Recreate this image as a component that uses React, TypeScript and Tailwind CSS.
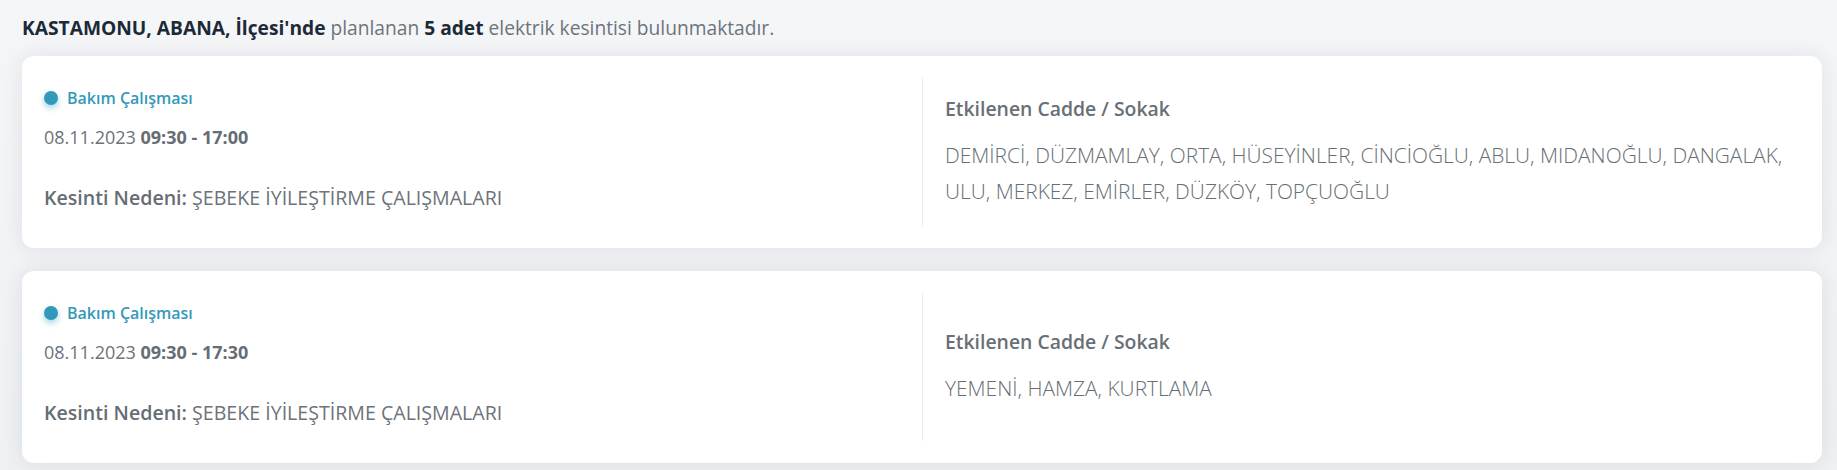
import React from "react";

type Item = {
  date: string;
  time: string;
  reason: string;
  streets: string;
};

const items: Item[] = [
  {
    date: "08.11.2023",
    time: "09:30 - 17:00",
    reason: "ŞEBEKE İYİLEŞTİRME ÇALIŞMALARI",
    streets:
      "DEMİRCİ, DÜZMAMLAY, ORTA, HÜSEYİNLER, CİNCİOĞLU, ABLU, MIDANOĞLU, DANGALAK, ULU, MERKEZ, EMİRLER, DÜZKÖY, TOPÇUOĞLU",
  },
  {
    date: "08.11.2023",
    time: "09:30 - 17:30",
    reason: "ŞEBEKE İYİLEŞTİRME ÇALIŞMALARI",
    streets: "YEMENİ, HAMZA, KURTLAMA",
  },
];

function Card({ item }: { item: Item }) {
  return (
    <div className="w-[1800px] bg-white rounded-[12px] shadow-[0_0_22px_rgba(20,30,50,0.09)] px-[22px] py-[22px]">
      <div className="grid grid-cols-2 h-[148px]">
        <div className="flex flex-col pt-[8px]">
          <div className="flex items-center h-[24px]">
            <span className="w-[14px] h-[14px] rounded-full bg-[#3199ba] shadow-[0_3px_6px_rgba(49,153,186,0.45)]" />
            <span className="ml-[9px] text-[16px] leading-[24px] font-semibold text-[#3399b9]">
              Bakım Çalışması
            </span>
          </div>
          <div className="mt-[13px] text-[18px] leading-[28px] text-[#6c737a]">
            {item.date} <span className="font-bold text-[#666d74]">{item.time}</span>
          </div>
          <div className="mt-[33px] text-[19.6px] leading-[28px] text-[#6c737a]">
            <span className="font-semibold text-[#666d74]">Kesinti Nedeni:</span> {item.reason}
          </div>
        </div>
        <div className="border-l border-[#ececec] pl-[22px] flex flex-col justify-center">
          <div className="text-[19.4px] leading-[28px] font-semibold text-[#686f76]">
            Etkilenen Cadde / Sokak
          </div>
          <div className="mt-[14px] text-[20.9px] leading-[36px] font-light text-[#676e75]">
            {item.streets}
          </div>
        </div>
      </div>
    </div>
  );
}

export default function App() {
  return (
    <div
      className="min-h-[470px] w-[1837px] bg-gradient-to-b from-[#f5f6f8] to-[#eef0f2] pt-[14px] px-[22px] pb-[8px]"
      style={{ fontFamily: '"Open Sans", "Noto Sans", sans-serif' }}
    >
      <div className="text-[19.2px] leading-[28px] text-[#6c747c] mb-[14px]">
        <span className="font-bold text-[#1c2a38]">KASTAMONU, ABANA, İlçesi'nde</span> planlanan{" "}
        <span className="font-bold text-[#1c2a38]">5 adet</span> elektrik kesintisi bulunmaktadır.
      </div>
      <div className="flex flex-col gap-[23px]">
        {items.map((it, i) => (
          <Card key={i} item={it} />
        ))}
      </div>
    </div>
  );
}
